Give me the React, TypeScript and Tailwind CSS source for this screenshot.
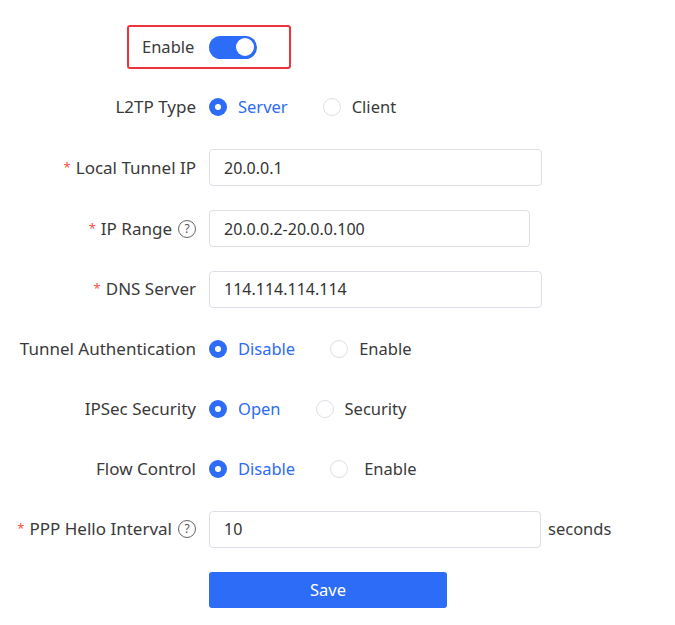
import { useState } from 'react'

const BLUE = '#2d6cf6'

function Label({ text, required, help }: { text: string; required?: boolean; help?: boolean }) {
  return (
    <div className="w-[196px] shrink-0 flex items-center justify-end text-[17px] text-[#3a3a3a]">
      {required && <span className="text-[#f5504b] mr-[5px] text-[13px]">*</span>}
      <span>{text}</span>
      {help && (
        <span className="ml-[6px] w-[18px] h-[18px] rounded-full border border-[#666] text-[#555] text-[12px] leading-none flex items-center justify-center">
          ?
        </span>
      )}
    </div>
  )
}

function Radio({ checked, label, gap = 'ml-[11px]' }: { checked: boolean; label: string; gap?: string }) {
  return (
    <div className="flex items-center">
      {checked ? (
        <span className="w-[18px] h-[18px] rounded-full bg-[#2d6cf6] flex items-center justify-center">
          <span className="w-[6px] h-[6px] rounded-full bg-white" />
        </span>
      ) : (
        <span className="w-[18px] h-[18px] rounded-full border border-[#dcdfe6] bg-white" />
      )}
      <span className={`${gap} text-[16.5px] ${checked ? 'text-[#2d6cf6]' : 'text-[#3a3a3a]'}`}>{label}</span>
    </div>
  )
}

function Input({ value, width }: { value: string; width: string }) {
  return (
    <div className={`${width} h-[37px] border border-[#dcdfe6] rounded-[4px] flex items-center px-[14px] text-[16px] text-[#333]`}>
      {value}
    </div>
  )
}

export default function App() {
  const [enabled] = useState(true)

  return (
    <div className="w-[675px] h-[625px] bg-white pt-[17px]" style={{ fontFamily: '"Noto Sans", "Open Sans", sans-serif' }}>
      <div className="h-[60px] flex items-center">
        <div className="ml-[127px] w-[164px] h-[44px] border-2 border-[#f0353a] rounded-[3px] flex items-center">
          <span className="ml-[13px] text-[16.5px] text-[#3a3a3a]">Enable</span>
          <span className={`ml-[15px] w-[48px] h-[23px] rounded-full flex items-center justify-end pr-[3px] ${enabled ? 'bg-[#2d6cf6]' : 'bg-gray-300'}`}>
            <span className="w-[18px] h-[18px] rounded-full bg-white" />
          </span>
        </div>
      </div>

      <div className="h-[60px] flex items-center gap-[13px]">
        <Label text="L2TP Type" />
        <div className="flex items-center gap-[35px]">
          <Radio checked label="Server" />
          <Radio checked={false} label="Client" />
        </div>
      </div>

      <div className="h-[61px] flex items-center gap-[13px]">
        <Label text="Local Tunnel IP" required />
        <Input value="20.0.0.1" width="w-[333px]" />
      </div>

      <div className="h-[61px] flex items-center gap-[13px]">
        <Label text="IP Range" required help />
        <Input value="20.0.0.2-20.0.0.100" width="w-[321px]" />
      </div>

      <div className="h-[60px] flex items-center gap-[13px]">
        <Label text="DNS Server" required />
        <Input value="114.114.114.114" width="w-[333px]" />
      </div>

      <div className="h-[60px] flex items-center gap-[13px]">
        <Label text="Tunnel Authentication" />
        <div className="flex items-center gap-[35px]">
          <Radio checked label="Disable" />
          <Radio checked={false} label="Enable" />
        </div>
      </div>

      <div className="h-[60px] flex items-center gap-[13px]">
        <Label text="IPSec Security" />
        <div className="flex items-center gap-[35px]">
          <Radio checked label="Open" />
          <Radio checked={false} label="Security" />
        </div>
      </div>

      <div className="h-[60px] flex items-center gap-[13px]">
        <Label text="Flow Control" />
        <div className="flex items-center gap-[35px]">
          <Radio checked label="Disable" />
          <Radio checked={false} label="Enable" gap="ml-[16px]" />
        </div>
      </div>

      <div className="h-[60px] flex items-center gap-[13px]">
        <Label text="PPP Hello Interval" required help />
        <Input value="10" width="w-[332px]" />
        <span className="-ml-[6px] text-[16.5px] text-[#3a3a3a]">seconds</span>
      </div>

      <div className="h-[62px] flex items-center">
        <button className="ml-[209px] w-[238px] h-[36px] rounded-[3px] text-white text-[16.5px]" style={{ backgroundColor: BLUE }}>
          Save
        </button>
      </div>
    </div>
  )
}
